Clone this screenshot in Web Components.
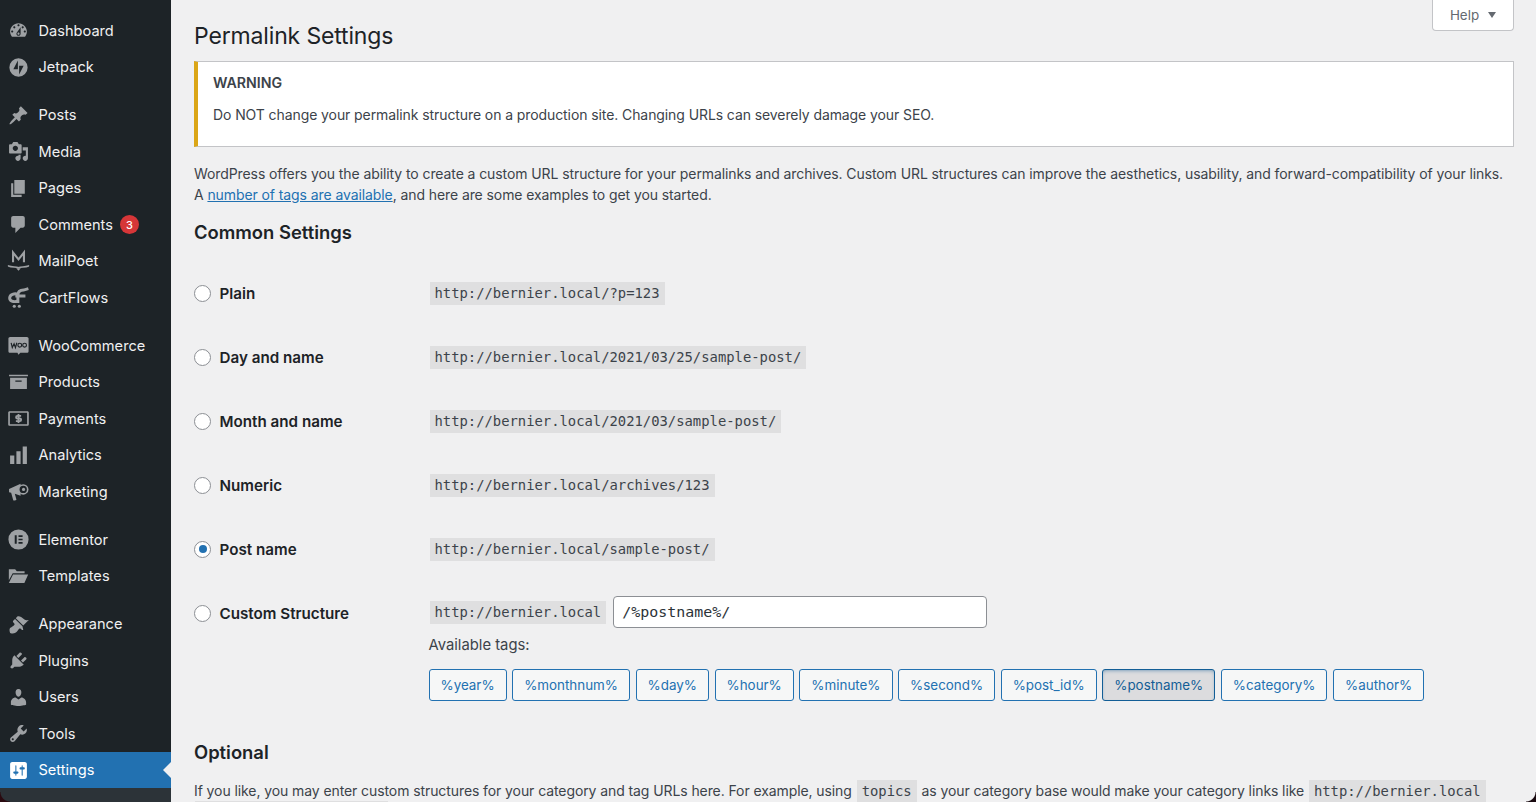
<!DOCTYPE html>
<html lang="en"><head><meta charset="utf-8"><title>Permalink Settings</title>
<style>
html,body{margin:0;height:802px;overflow:hidden;background:#f0f0f1}
body{font-family:Inter,"Liberation Sans",sans-serif;color:#3c434a}
</style></head><body>
<wp-app>
<wp-menu slot="menu">
<wp-item icon="dashboard">Dashboard</wp-item>
<wp-item icon="jetpack" sep>Jetpack</wp-item>
<wp-item icon="post">Posts</wp-item>
<wp-item icon="media">Media</wp-item>
<wp-item icon="page">Pages</wp-item>
<wp-item icon="comment" badge="3">Comments</wp-item>
<wp-item icon="mailpoet">MailPoet</wp-item>
<wp-item icon="cartflows" sep>CartFlows</wp-item>
<wp-item icon="woo">WooCommerce</wp-item>
<wp-item icon="products">Products</wp-item>
<wp-item icon="payments">Payments</wp-item>
<wp-item icon="analytics">Analytics</wp-item>
<wp-item icon="marketing" sep>Marketing</wp-item>
<wp-item icon="elementor">Elementor</wp-item>
<wp-item icon="templates" sep>Templates</wp-item>
<wp-item icon="appearance">Appearance</wp-item>
<wp-item icon="plugins">Plugins</wp-item>
<wp-item icon="users">Users</wp-item>
<wp-item icon="tools">Tools</wp-item>
<wp-item icon="settings" current>Settings</wp-item>
</wp-menu>
<wp-help></wp-help>
<wp-title>Permalink Settings</wp-title>
<wp-notice heading="WARNING">Do NOT change your permalink structure on a production site. Changing URLs can severely damage your SEO.</wp-notice>
<wp-para>WordPress offers you the ability to create a custom URL structure for your permalinks and archives. Custom URL structures can improve the aesthetics, usability, and forward-compatibility of your links.<br>A <a href="#">number of tags are available</a>, and here are some examples to get you started.</wp-para>
<wp-heading style="--top:15px">Common Settings</wp-heading>
<wp-rows>
<wp-row label="Plain"><wp-code>http://bernier.local/?p=123</wp-code></wp-row>
<wp-row label="Day and name"><wp-code>http://bernier.local/2021/03/25/sample-post/</wp-code></wp-row>
<wp-row label="Month and name"><wp-code>http://bernier.local/2021/03/sample-post/</wp-code></wp-row>
<wp-row label="Numeric"><wp-code>http://bernier.local/archives/123</wp-code></wp-row>
<wp-row label="Post name" checked><wp-code>http://bernier.local/sample-post/</wp-code></wp-row>
<wp-row label="Custom Structure" custom><wp-code>http://bernier.local</wp-code><wp-input value="/%postname%/"></wp-input>
<wp-tags slot="extra">
<wp-tag>%year%</wp-tag><wp-tag>%monthnum%</wp-tag><wp-tag>%day%</wp-tag><wp-tag>%hour%</wp-tag><wp-tag>%minute%</wp-tag><wp-tag>%second%</wp-tag><wp-tag>%post_id%</wp-tag><wp-tag active>%postname%</wp-tag><wp-tag>%category%</wp-tag><wp-tag>%author%</wp-tag>
</wp-tags></wp-row>
</wp-rows>
<wp-heading style="--top:39px">Optional</wp-heading>
<wp-para style="--top:16px">If you like, you may enter custom structures for your category and tag URLs here. For example, using <wp-code style="margin:0 1px">topics</wp-code> as your category base would make your category links like <wp-code style="margin:0 1px">http://bernier.local<wbr>/topics/uncategorized/</wp-code>. If you leave these blank the defaults will be used.</wp-para>
</wp-app>
<script>
const ICONS={
dashboard:'<path fill-rule="evenodd" d="M3.76 16h12.48c1.1-1.37 1.76-3.11 1.76-5 0-4.42-3.58-8-8-8s-8 3.58-8 8c0 1.89.66 3.63 1.76 5zM10 4c.55 0 1 .45 1 1s-.45 1-1 1-1-.45-1-1 .45-1 1-1zM6 6c.55 0 1 .45 1 1s-.45 1-1 1-1-.45-1-1 .45-1 1-1zm8 0c.55 0 1 .45 1 1s-.45 1-1 1-1-.45-1-1 .45-1 1-1zm-5.37 5.55L12 7v6c0 1.1-.9 2-2 2s-2-.9-2-2c0-.57.24-1.08.63-1.45zM4 10c.55 0 1 .45 1 1s-.45 1-1 1-1-.45-1-1 .45-1 1-1zm12 0c.55 0 1 .45 1 1s-.45 1-1 1-1-.45-1-1 .45-1 1-1zm-5 3c0-.55-.45-1-1-1s-1 .45-1 1 .45 1 1 1 1-.45 1-1z"/>',
jetpack:'<path fill-rule="evenodd" d="M10 1.300a8.700 8.700 0 1 0 0 17.400 8.700 8.700 0 0 0 0-17.400zM9.400 11.600H5.100L9.400 3.300zM10.600 8.400h4.300l-4.300 8.300z"/>',
post:'<path d="M10.44 3.02l1.82-1.82 6.36 6.35-1.83 1.82c-1.05-.68-2.48-.57-3.41.36l-.75.75c-.92.93-1.04 2.35-.35 3.41l-1.83 1.82-2.41-2.41-2.8 2.79c-.42.42-3.38 2.71-3.8 2.29s1.86-3.39 2.28-3.81l2.79-2.79L4.1 9.36l1.83-1.82c1.05.69 2.48.57 3.4-.36l.75-.75c.93-.92 1.05-2.35.36-3.41z"/>',
media:'<path fill-rule="evenodd" d="M13 11V4c0-.55-.45-1-1-1h-1.67L9 1H5L3.67 3H2c-.55 0-1 .45-1 1v7c0 .55.45 1 1 1h10c.55 0 1-.45 1-1zM7 4.5c1.38 0 2.5 1.12 2.5 2.5S8.38 9.5 7 9.5 4.5 8.38 4.5 7 5.62 4.5 7 4.5zM14 6h5v10.5c0 1.38-1.12 2.5-2.5 2.5S14 17.88 14 16.5s1.12-2.5 2.5-2.5c.17 0 .34.02.5.05V9h-3V6zm-4 8.05V13h2v3.5c0 1.38-1.12 2.5-2.5 2.5S7 17.88 7 16.5 8.12 14 9.5 14c.17 0 .34.02.5.05z"/>',
page:'<path d="M6 15V2h10v13H6zm-1 1h8v2H3V5h2v11z"/>',
comment:'<path d="M5 2h9c1.1 0 2 .9 2 2v7c0 1.1-.9 2-2 2h-2l-5 5v-5H5c-1.1 0-2-.9-2-2V4c0-1.1.9-2 2-2z"/>',
mailpoet:'<path fill="none" stroke="currentColor" stroke-width="2" d="M4.800 10.800V1.500L10 8l5.200-6.500v9.300"/><path fill="none" stroke="currentColor" stroke-width="1.500" stroke-linecap="round" d="M.5 14.200c3.300 1.300 6.800.8 9.500 1.800 2.700-1 6.200-.5 9.500-1.800"/><path d="M7.800 16.400h4.400L10 18.800z"/>',
cartflows:'<path fill="none" stroke="currentColor" stroke-width="2.800" d="M9.800 6.900C5.800 5.800 1.800 7 1.600 10.300c-.2 3 3.200 4.200 7.500 3.300"/><path fill="none" stroke="currentColor" stroke-width="2.800" d="M9.400 15.200V7.800c0-3.300 2.400-4.800 5.400-4.900l4.600-1.300M7 8.500h9.600"/><circle cx="6" cy="18.300" r="1.500"/><circle cx="10.800" cy="18.300" r="1.500"/>',
woo:'<path fill-rule="evenodd" d="M2 1.800h16c.9 0 1.600.7 1.600 1.600v12c0 .9-.7 1.600-1.600 1.600h-6.200l-1.900 1.900-.9-1.900H2c-.9 0-1.600-.7-1.600-1.600v-12c0-.9.7-1.600 1.600-1.600z"/><g fill="none" stroke="#1d2327" stroke-width="1.100"><path d="M3 7.400l1.100 4.600 1.700-3.600 1.300 3.600 1.300-4.600"/><circle cx="11.200" cy="9.700" r="1.800"/><circle cx="15.800" cy="9.700" r="1.800"/></g>',
products:'<path fill-rule="evenodd" d="M1 2.500h18v1.600H1zM2 5.500h16v10.800H2zM7 8v1.200h6V8z"/>',
payments:'<path fill-rule="evenodd" d="M1.500 3h17c.8 0 1.300.6 1.300 1.300v11.400c0 .7-.5 1.300-1.300 1.300h-17C.7 17 .2 16.400.2 15.700V4.300C.2 3.600.7 3 1.500 3zM1.800 4.600v10.800h16.400V4.600z"/><path fill="none" stroke="currentColor" stroke-width="1.700" d="M12.500 7.500H9c-1.800 0-1.800 2.500 0 2.500h2.200c1.800 0 1.800 2.600 0 2.600H7.500M10 5.800v8.400"/>',
analytics:'<path d="M2 10h4v8H2zM8 6h4v12H8zM14 1.500h4V18h-4z"/>',
marketing:'<path d="M1 7.500 12 2.500V14L6.500 12.200 8 17.600c.2.700-2.800 1.500-3 .8L3 11.300 1 10.700z"/><circle cx="14.500" cy="8" r="5"/><circle cx="14.500" cy="8" r="3.500" fill="#1d2327"/><circle cx="14.800" cy="8" r="1.500"/>',
elementor:'<path fill-rule="evenodd" d="M10 .4a9.600 9.600 0 1 0 0 19.200A9.600 9.600 0 0 0 10 .4zM6.400 6h1.900v8H6.400zM10 6h3.900v1.600H10zM10 9.200h3.900v1.600H10zM10 12.400h3.900V14H10z"/>',
templates:'<path d="M.8 3.200h6l1.600 1.800h7.400v2H4.500L.8 13.500zM4.800 8H19.200l-3.600 8.200H.8z"/>',
appearance:'<path d="M14.480 11.060 7.410 3.990l1.500-1.500c.5-.56 2.300-.47 3.510.32 1.210.8 1.430 1.280 2.910 2.100 1.180.64 2.450 1.260 4.450.85zm-.71.71L6.700 4.700 4.930 6.470c-.39.39-.39 1.020 0 1.410l1.060 1.060c.39.39.39 1.030 0 1.420-.6.6-1.430 1.110-2.210 1.690-.35.26-.7.53-1.010.84C1.430 13.230.99 15.500 2 18c2.500 1 4.770.57 6.120-.78.31-.31.58-.66.84-1.010.57-.78 1.080-1.610 1.690-2.210.39-.39 1.020-.39 1.410 0l1.060 1.060c.39.39 1.020.39 1.410 0z"/>',
plugins:'<path d="M13.110 4.360 9.870 7.600 8 5.730l3.240-3.240c.35-.34 1.050-.2 1.560.32.52.51.66 1.210.31 1.550zm-8 1.770.91-1.120 9.010 9.010-1.190.84c-.71.71-2.630 1.160-3.820 1.160H6.140L4.900 17.260c-.59.59-1.540.59-2.120 0-.59-.58-.59-1.530 0-2.120l1.240-1.240v-3.880c0-1.130.4-3.190 1.090-3.890zm7.260 3.970 3.240-3.240c.34-.35 1.040-.21 1.550.31.52.51.66 1.210.31 1.550l-3.240 3.250z"/>',
users:'<path d="M10 9.250c-2.270 0-2.730-3.440-2.730-3.440C7 4.020 7.820 2 9.970 2c2.160 0 2.980 2.020 2.710 3.810 0 0-.41 3.440-2.680 3.440zm0 2.570L12.720 10c2.390 0 4.520 2.330 4.520 4.530v2.490s-3.650 1.130-7.240 1.130c-3.650 0-7.240-1.130-7.240-1.130v-2.490c0-2.250 1.940-4.480 4.470-4.480z"/>',
tools:'<path fill-rule="evenodd" d="M16.680 9.770c-1.340 1.340-3.300 1.670-4.950.99l-5.410 6.520c-.99.99-2.590.99-3.580 0s-.99-2.590 0-3.570l6.520-5.420c-.68-1.650-.35-3.610.99-4.950 1.280-1.280 3.120-1.620 4.720-1.060l-2.890 2.890 2.820 2.820 2.860-2.870c.53 1.580.18 3.390-1.080 4.650zM3.810 16.210c.4.39 1.040.39 1.430 0 .4-.4.4-1.040 0-1.430-.39-.4-1.030-.4-1.430 0-.39.39-.39 1.030 0 1.430z"/>',
settings:'<path fill-rule="evenodd" d="M18 16V4c0-1.100-.9-2-2-2H4c-1.100 0-2 .9-2 2v12c0 1.100.9 2 2 2h12c1.100 0 2-.9 2-2zM8 11h1c.55 0 1 .45 1 1s-.45 1-1 1H8v1.500c0 .28-.22.5-.5.5s-.5-.22-.5-.5V13H6c-.55 0-1-.45-1-1s.45-1 1-1h1V5.500c0-.28.22-.5.5-.5s.5.22.5.5V11zm5-2h-1c-.55 0-1-.45-1-1s.45-1 1-1h1V5.500c0-.28.22-.5.5-.5s.5.22.5.5V7h1c.55 0 1 .45 1 1s-.45 1-1 1h-1v5.500c0 .28-.22.5-.5.5s-.5-.22-.5-.5V9z"/>'
};
function def(name,css,html){
  customElements.define(name,class extends HTMLElement{
    constructor(){super();const r=this.attachShadow({mode:'open'});r.innerHTML='<style>'+css+'</style>'+(typeof html==='function'?html(this):html);}
  });
}
def('wp-app',`:host{display:flex;height:802px;position:relative;overflow:hidden;background:#f0f0f1}
.main{flex:1;min-width:0;padding:0 22px 0 23px;font-size:14px;letter-spacing:-.09px;line-height:21px}
.c{position:absolute;bottom:0;width:10px;height:10px}
.l{left:0;background:radial-gradient(circle at 100% 0,transparent 9px,#2a0a10 10px)}
.r{right:0;background:radial-gradient(circle at 0 0,transparent 9px,#1a0a10 10px)}`,
`<slot name="menu"></slot><div class="main"><slot></slot></div><div class="c l"></div><div class="c r"></div>`);
def('wp-menu',`:host{display:flex;flex-direction:column;flex:0 0 171px;width:171px;height:802px;background:#1d2327;padding-top:12.25px;box-sizing:border-box;position:relative}
.end{flex:1;background:#2c3338}`,`<slot></slot><div class="end"></div>`);
def('wp-item',`:host{display:flex;align-items:center;height:36.5px;color:#f0f0f1;font-size:14.6px;letter-spacing:0;position:relative;padding-left:8px;box-sizing:border-box}
:host([sep]){margin-bottom:11.5px}
:host([current]){background:#2271b1;color:#fff}
:host([current])::after{content:"";position:absolute;right:0;top:50%;margin-top:-8px;border:8px solid transparent;border-left:0;border-right-color:#f0f0f1}
svg{width:21px;height:21px;fill:currentColor;flex:none;color:#9ea1a4;overflow:visible;margin-right:9.5px}
:host([current]) svg{color:#fff}
.b{margin-left:7px;width:19px;height:19px;border-radius:50%;background:#d63638;color:#fff;font-size:11px;display:flex;align-items:center;justify-content:center;font-weight:500}`,
h=>`<svg viewBox="0 0 20 20">${ICONS[h.getAttribute('icon')]||''}</svg><slot></slot>${h.hasAttribute('badge')?`<span class="b">${h.getAttribute('badge')}</span>`:''}`);
def('wp-help',`:host{float:right;display:flex;align-items:center;justify-content:center;gap:9px;width:82px;height:31px;box-sizing:border-box;background:#fff;border:1px solid #c3c4c7;border-top:0;border-radius:0 0 4px 4px;color:#646970;font-size:13.4px;letter-spacing:0}
i{width:0;height:0;border:4.5px solid transparent;border-top:6px solid #646970;border-bottom:0}`,`<span>Help</span><i></i>`);
def('wp-title',`:host{display:block;color:#1d2327;font-size:23px;letter-spacing:-.15px;line-height:30px;padding-top:21px;margin-bottom:10px;font-weight:400}`,`<slot></slot>`);
def('wp-notice',`:host{display:block;background:#fff;border:1px solid #c3c4c7;border-left:4px solid #dba617;height:86px;box-sizing:border-box;padding:9.5px 15px;margin-bottom:16px;line-height:21px;color:#3c434a}
.h{font-weight:600;margin-bottom:11px;font-size:14.2px;letter-spacing:0}`,h=>`<div class="h">${h.getAttribute('heading')}</div><slot></slot>`);
def('wp-para',`:host{display:block;line-height:21px;margin-top:var(--top,0)}
::slotted(a){color:#2271b1}`,`<slot></slot>`);
def('wp-heading',`:host{display:block;color:#1d2327;font-size:18.4px;letter-spacing:0;font-weight:600;line-height:24px;margin-top:var(--top,0)}`,`<slot></slot>`);
def('wp-rows',`:host{display:block;padding-top:17px}`,`<slot></slot>`);
def('wp-row',`:host{display:grid;grid-template-columns:235.5px 1fr}
.th{display:flex;align-items:center;height:64px;gap:8.5px;font-weight:600;color:#1d2327;font-size:15.2px;letter-spacing:0}
.r{width:15px;height:15px;border:1px solid #8c8f94;border-radius:50%;background:#fff;display:flex;align-items:center;justify-content:center}
.r i{width:8px;height:8px;border-radius:50%;background:#2271b1}
.td{display:flex;align-items:center;height:64px;gap:7px}
:host([custom]) .td{height:62px}
.x{grid-column:2;margin-top:-10px}`,
h=>`<div class="th"><span class="r">${h.hasAttribute('checked')?'<i></i>':''}</span><span>${h.getAttribute('label')}</span></div><div class="td"><slot></slot></div><div class="x"><slot name="extra"></slot></div>`);
def('wp-code',`:host{font-family:"DejaVu Sans Mono",monospace;font-size:13.85px;letter-spacing:0;background:rgba(0,0,0,.07);padding:3px 5px;line-height:17px;color:#3c434a;-webkit-box-decoration-break:clone;box-decoration-break:clone}`,`<slot></slot>`);
def('wp-input',`:host{display:flex;align-items:center;width:374px;height:32px;box-sizing:border-box;background:#fff;border:1px solid #8c8f94;border-radius:4px;padding:0 8px;font-family:"DejaVu Sans Mono",monospace;font-size:14.95px;letter-spacing:0;color:#2c3338}`,h=>`<span>${h.getAttribute('value')}</span>`);
def('wp-tags',`:host{display:block;margin-left:-1px}
.l{line-height:21px;margin-bottom:13px;font-size:14.8px;letter-spacing:0}
.w{display:flex;gap:5.6px}`,`<div class="l">Available tags:</div><div class="w"><slot></slot></div>`);
def('wp-tag',`:host{display:flex;align-items:center;height:32px;box-sizing:border-box;padding:0 11px;border:1px solid #2271b1;border-radius:3px;background:#f6f7f7;color:#2271b1;font-size:13.4px;letter-spacing:0}
:host([active]){background:#dcdcde;color:#135e96;border-color:#135e96;box-shadow:inset 0 2px 5px -3px #135e96}`,`<slot></slot>`);
</script>
</body></html>
